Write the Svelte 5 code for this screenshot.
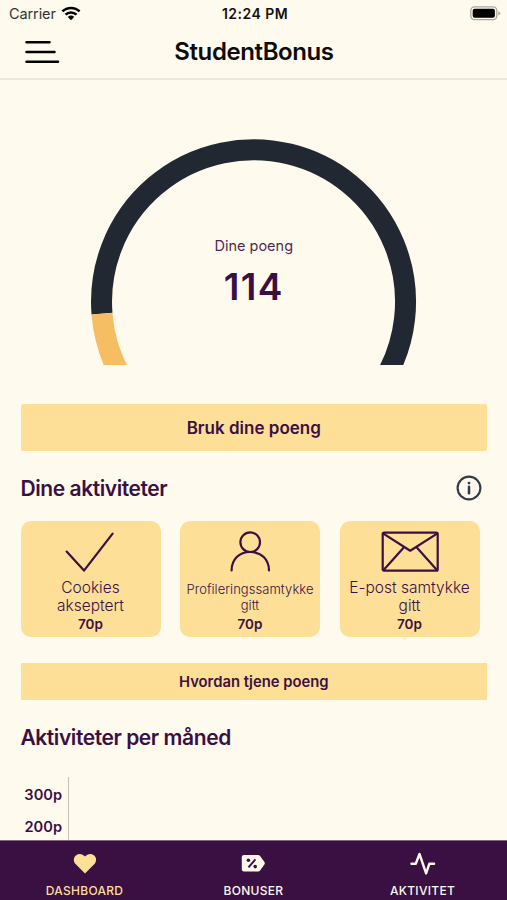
<script>
  const points = 114;

  const activities = [
    { icon: "check", label: "Cookies akseptert", points: 70 },
    { icon: "person", label: "Profileringssamtykke gitt", points: 70, small: true },
    { icon: "mail", label: "E-post samtykke gitt", points: 70 },
  ];

  const tabs = [
    { icon: "heart", label: "DASHBOARD", active: true },
    { icon: "ticket", label: "BONUSER" },
    { icon: "pulse", label: "AKTIVITET" },
  ];
</script>

<div class="app">
  <div class="status">
    <div class="carrier">
      <span>Carrier</span>
      <svg width="20" height="15" viewBox="0 0 20 15">
        <g fill="none" stroke="#000" stroke-width="2.5">
          <path d="M1.4 5.4a12.4 12.4 0 0 1 17.2 0" />
          <path d="M4.5 8.7a7.9 7.9 0 0 1 11 0" />
        </g>
        <path d="M6.8 10.9a4.6 4.6 0 0 1 6.4 0L10 14.2z" />
      </svg>
    </div>
    <span class="time">12:24 PM</span>
    <svg class="battery" width="31" height="15" viewBox="0 0 31 15">
      <rect x=".8" y=".9" width="26" height="12.8" rx="3.6" fill="none" stroke="#aaa69c" stroke-width="1.3" />
      <rect x="2.7" y="2.8" width="22.2" height="9" rx="2" />
      <path d="M28.3 5.2q2 .8 2 2.1t-2 2.1z" fill="#aaa69c" />
    </svg>
  </div>

  <header>
    <button class="menu" aria-label="Meny">
      <svg width="36" height="25" viewBox="0 0 36 25" stroke="#000" stroke-width="2.5" stroke-linecap="round">
        <path d="M2.5 2.2h23M2.5 12h28M2.5 21.7h31.5" />
      </svg>
    </button>
    <h1>StudentBonus</h1>
  </header>

  <main>
    <div class="gauge">
      <svg width="328" height="226" viewBox="-1 0 328 226" fill="none" stroke-width="21">
        <path d="M11 174.7A152 152 0 1 1 291.6 243" stroke="#222831" />
        <path d="M11 174.7A152 152 0 0 0 33.4 243" stroke="#f6be62" />
      </svg>
      <div class="score">
        <span>Dine poeng</span>
        <strong>{points}</strong>
      </div>
    </div>

    <button class="btn btn-use">Bruk dine poeng</button>

    <div class="section-head">
      <h2>Dine aktiviteter</h2>
      <svg width="26" height="26" viewBox="0 0 26 26" fill="none" stroke="#323a45" stroke-width="2.1">
        <circle cx="13" cy="13" r="11.4" />
        <path d="M13 11.7v6.5" stroke-width="2.5" stroke-linecap="round" />
        <circle cx="13" cy="8.1" r="1.4" fill="#323a45" stroke="none" />
      </svg>
    </div>

    <div class="cards">
      {#each activities as a}
        <div class="card">
          <svg width="60" height="44" viewBox="0 0 60 44" fill="none" stroke="#3a1042" stroke-width="2.2" stroke-linecap="round" stroke-linejoin="round">
            {#if a.icon === "check"}
              <path d="M5.6 22.6L23 41.6L51.6 4.6" />
            {:else if a.icon === "person"}
              <circle cx="30.2" cy="13.2" r="9.8" />
              <path d="M11.6 41.4C11.6 30.2 19.2 23 30.2 23S49 30.2 49 41.4" />
            {:else}
              <rect x="2.7" y="3.7" width="55" height="38" rx="1.5" />
              <path d="M3.4 4.6L30.2 21.7L57.1 4.6M3.4 41.2L24 18.2M57.1 41.2L36.6 18.2" />
            {/if}
          </svg>
          <p class:small={a.small}>{a.label}</p>
          <b>{a.points}p</b>
        </div>
      {/each}
    </div>

    <button class="btn btn-earn">Hvordan tjene poeng</button>

    <h2 class="chart-title">Aktiviteter per måned</h2>
    <div class="chart">
      <span>300p</span>
      <span>200p</span>
    </div>
  </main>

  <nav>
    {#each tabs as t}
      <div class="tab" class:active={t.active}>
        <svg width="28" height="26" viewBox="0 0 28 26" fill="currentColor">
          {#if t.icon === "heart"}
            <path d="M14 23.6L4.8 14.3C1.8 11.2 2.6 7 5.2 5.2C8 3.2 11.5 3.8 14 6.5C16.5 3.8 20 3.2 22.8 5.2C25.4 7 26.2 11.2 23.2 14.3z" />
          {:else if t.icon === "ticket"}
            <path d="M3.9 5h14.2q1.2 0 2 1l4.3 6.1q.8 1.2 0 2.4l-4.3 6q-.8 1.1-2 1.1H3.9Q1.8 21.6 1.8 19.5V7.1Q1.8 5 3.9 5z" />
            <path d="M8.4 17.3L15.4 9.4" stroke="#3a1042" stroke-width="1.9" />
            <circle cx="8.4" cy="10.2" r="1.8" fill="#3a1042" />
            <circle cx="15.2" cy="16.6" r="1.8" fill="#3a1042" />
          {:else}
            <path d="M2.5 13.7h4.3L10.5 4L17.1 23.3L20.4 13.7H25.1" fill="none" stroke="currentColor" stroke-width="2.4" stroke-linecap="round" stroke-linejoin="round" />
          {/if}
        </svg>
        <span>{t.label}</span>
      </div>
    {/each}
  </nav>
</div>

<style>
  :global(body) { margin: 0; background: #fffaee; }
  .app { display: flex; flex-direction: column; width: 507px; height: 900px; overflow: hidden; background: #fffaee; color: #3a1042; font-family: Inter, "Liberation Sans", sans-serif; }
  h1, h2, p { margin: 0; }
  svg { display: block; flex: none; }
  button { border: 0; padding: 0; font-family: inherit; color: inherit; }

  .status { display: grid; grid-template-columns: 1fr auto 1fr; align-items: center; height: 27px; padding: 0 6px 0 9px; color: #111; font-size: 14.5px; box-sizing: border-box; }
  .carrier { display: flex; align-items: center; gap: 5px; color: #333; letter-spacing: -.1px; }
  .time { font-weight: 600; font-size: 14px; letter-spacing: .45px; }
  .battery { justify-self: end; }

  header { display: grid; grid-template-columns: 1fr auto 1fr; align-items: center; height: 53px; padding: 0 23px 1px 24px; box-sizing: border-box; border-bottom: 2px solid #ece8df; }
  .menu { background: none; justify-self: start; }
  h1 { color: #0c0c0c; font-size: 24px; line-height: 30px; font-weight: 600; letter-spacing: -.4px; }

  main { flex: 1; min-height: 0; overflow: hidden; padding: 59px 20px 0 20.5px; }
  .gauge { display: grid; justify-items: center; }
  .gauge > * { grid-area: 1 / 1; }
  .score { display: flex; flex-direction: column; align-items: center; padding-top: 97px; }
  .score span { font-size: 14.5px; line-height: 20px; opacity: .9; }
  .score strong { font-size: 37px; line-height: 44px; font-weight: 600; margin-top: 9px; letter-spacing: 1.4px; }

  .btn { display: block; width: 100%; background: #fddf98; font-weight: 600; }
  .btn-use { height: 47px; margin-top: 39px; border-radius: 2px; font-size: 17px; }
  .btn-earn { height: 37px; margin-top: 26px; font-size: 14.8px; }

  .section-head { display: flex; justify-content: space-between; align-items: center; height: 26px; margin-top: 24px; padding-right: 5px; }
  h2 { font-size: 21px; line-height: 27px; font-weight: 600; letter-spacing: -.43px; }

  .cards { display: flex; gap: 19.5px; margin-top: 20px; }
  .card { display: flex; flex-direction: column; align-items: center; width: 140px; height: 116px; padding-top: 8px; box-sizing: border-box; border-radius: 10px; background: #fddf98; text-align: center; }
  .card p { height: 37px; margin-top: 5.5px; padding: 0 6px; font-size: 15.5px; line-height: 18.5px; font-weight: 300; }
  .card p.small { padding: 3.5px 0 0; height: 33.5px; font-size: 13px; line-height: 15.5px; letter-spacing: .05px; }
  .card b { font-size: 13.5px; line-height: 16px; font-weight: 600; }

  .chart-title { margin-top: 24px; }
  .chart { display: flex; flex-direction: column; gap: 14px; width: 48.5px; height: 120px; margin-top: 26px; padding-top: 9px; padding-right: 6px; box-sizing: border-box; border-right: 1px solid #c5c1b8; text-align: right; font-size: 14.6px; line-height: 18px; font-weight: 600; }

  nav { display: flex; height: 60px; flex: none; background: #3a1042; color: #fffaee; border-top: 1px solid #81657f; box-sizing: border-box; }
  .tab { display: flex; flex: 1; flex-direction: column; align-items: center; padding-top: 9px; font-size: 12px; line-height: 16px; font-weight: 500; letter-spacing: .3px; }
  .tab span { margin-top: 7px; }
  .tab.active { color: #fddf98; }
</style>
